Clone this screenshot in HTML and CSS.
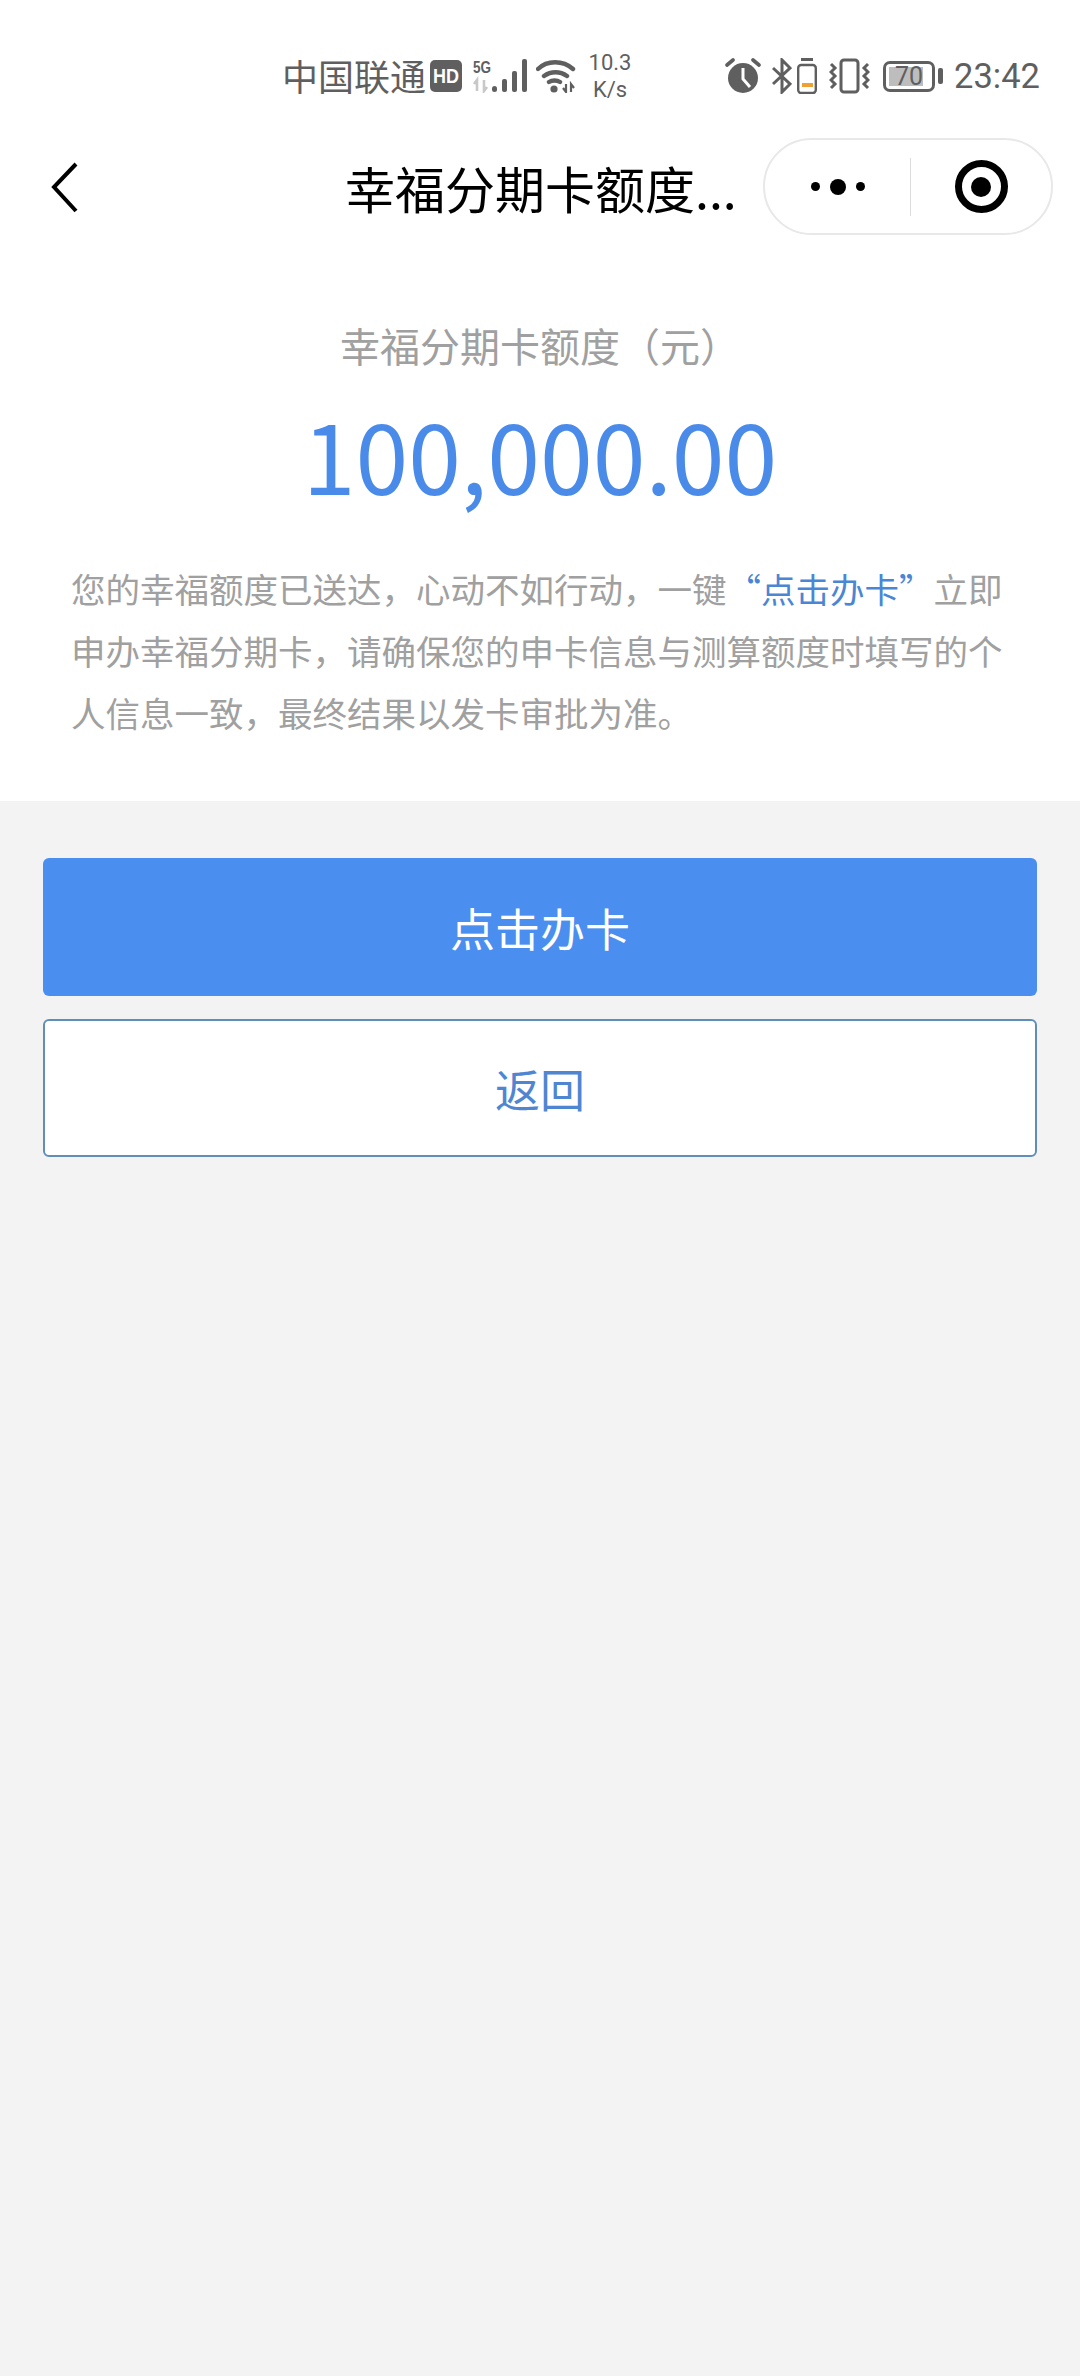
FILE: index.html
```html
<!DOCTYPE html>
<html lang="zh-CN">
<head>
    <meta charset="UTF-8">
    <meta name="viewport" content="width=device-width, initial-scale=1.0">
    <title>幸福分期卡额度</title>
    <link rel="stylesheet" href="styles.css">
</head>
<body>
    <div class="status-bar">
        <span class="carrier">中国联通</span>
        <svg class="icon-hd" width="32" height="32" viewBox="0 0 32 32">
            <rect width="32" height="32" rx="5" fill="#5f5f5f"/>
            <text x="16" y="23" text-anchor="middle" textLength="26" lengthAdjust="spacingAndGlyphs" class="hd-text">HD</text>
        </svg>
        <svg class="icon-signal" width="54" height="34" viewBox="0 0 54 34">
            <text x="0" y="14" textLength="18" lengthAdjust="spacingAndGlyphs" class="net-text">5G</text>
            <path d="M4 32V21l-3 4M11 21v11l3-4" stroke="#c8c8c8" stroke-width="2.6" fill="none"/>
            <rect x="19" y="27" width="5" height="6" rx="2.5" fill="#5f5f5f"/>
            <rect x="29" y="20" width="5" height="13" rx="2" fill="#5f5f5f"/>
            <rect x="39" y="12" width="5" height="21" rx="2" fill="#5f5f5f"/>
            <rect x="49" y="0" width="5" height="33" rx="2" fill="#5f5f5f"/>
        </svg>
        <svg class="icon-wifi" width="40" height="34" viewBox="0 0 40 34">
            <path d="M2 10C11 1 27 1 37 10M8 17c7-5 16-5 23 0M13 23c3-2 8-2 11 0" stroke="#5f5f5f" stroke-width="4.4" fill="none" stroke-linecap="round"/>
            <circle cx="18" cy="30" r="3.6" fill="#5f5f5f"/>
            <path d="M30 25v8l-3-4M35 33v-8l3 4" stroke="#5f5f5f" stroke-width="2.2" fill="none"/>
        </svg>
        <div class="speed">
            <span>10.3</span>
            <span>K/s</span>
        </div>
        <svg class="icon-alarm" width="36" height="36" viewBox="0 0 36 36">
            <circle cx="18" cy="20" r="15" fill="#5f5f5f"/>
            <path d="M18 10v11l7 8" stroke="#fff" stroke-width="3" fill="none"/>
            <path d="M2 7l6-5M34 7l-6-5" stroke="#5f5f5f" stroke-width="3.6" stroke-linecap="round"/>
        </svg>
        <svg class="icon-bt" width="20" height="36" viewBox="0 0 20 36">
            <path d="M1 10l17 16-8 8V2l8 8L1 26" stroke="#5f5f5f" stroke-width="3" fill="none"/>
        </svg>
        <svg class="icon-phone-battery" width="20" height="36" viewBox="0 0 20 36">
            <rect x="4" y="0" width="12" height="3" fill="#5f5f5f"/>
            <rect x="1.2" y="7" width="17.6" height="28" rx="3" stroke="#5f5f5f" stroke-width="2.4" fill="none"/>
            <rect x="5" y="25" width="11" height="4" fill="#f0a030"/>
        </svg>
        <svg class="icon-vibrate" width="41" height="36" viewBox="0 0 41 36">
            <rect x="12" y="2" width="17" height="32" rx="3" stroke="#5f5f5f" stroke-width="3" fill="none"/>
            <path d="M2 6l4 4-4 4 4 4-4 4 4 4-4 4M39 6l-4 4 4 4-4 4 4 4-4 4 4 4" stroke="#5f5f5f" stroke-width="3" fill="none"/>
        </svg>
        <div class="battery">
            <div class="battery-body">
                <div class="battery-fill"></div>
                <span class="battery-num">70</span>
            </div>
            <div class="battery-nub"></div>
        </div>
        <span class="clock">23:42</span>
    </div>

    <div class="nav-bar">
        <svg class="back-icon" width="34" height="52" viewBox="0 0 34 52">
            <path d="M30 3L8 26l22 24" stroke="#000" stroke-width="4" fill="none"/>
        </svg>
        <div class="nav-title">幸福分期卡额度...</div>
        <div class="capsule">
            <div class="capsule-more">
                <i class="dot"></i><i class="dot dot-big"></i><i class="dot"></i>
            </div>
            <div class="capsule-line"></div>
            <div class="capsule-close">
                <div class="target"><div class="target-dot"></div></div>
            </div>
        </div>
    </div>

    <div class="quota-card">
        <div class="quota-label">幸福分期卡额度（元）</div>
        <div class="quota-amount">100,000.00</div>
        <p class="quota-desc">您的幸福额度已送达，心动不如行动，一键<span class="link">“点击办卡”</span>立即申办幸福分期卡，请确保您的申卡信息与测算额度时填写的个人信息一致，最终结果以发卡审批为准。</p>
    </div>

    <div class="actions">
        <button class="btn btn-primary">点击办卡</button>
        <button class="btn btn-outline">返回</button>
    </div>
</body>
</html>
```

FILE: styles.css
```css
* {
    box-sizing: border-box;
}
body {
    margin: 0;
    height: 2376px;
    background-color: #f3f3f3;
    font-family: "Noto Sans CJK SC", "Noto Sans", sans-serif;
    overflow: hidden;
}
.status-bar {
    display: flex;
    align-items: center;
    height: 138px;
    padding: 14px 0 0 282px;
    background: #fff;
    color: #5f5f5f;
}
.status-bar > * {
    flex: none;
}
.carrier {
    width: 148px;
    padding-bottom: 3px;
    font-size: 36px;
    line-height: 40px;
    white-space: nowrap;
}
.hd-text {
    font: bold 20px "Liberation Sans", sans-serif;
    fill: #fff;
}
.net-text {
    font: bold 17px "Liberation Sans", sans-serif;
    fill: #5f5f5f;
}
.icon-signal {
    margin-left: 11px;
}
.icon-wifi {
    margin-left: 9px;
}
.speed {
    display: flex;
    flex-direction: column;
    align-items: center;
    width: 44px;
    margin-left: 12px;
    font: 22px/27px Roboto, sans-serif;
}
.icon-alarm {
    margin-left: 93px;
}
.icon-bt {
    margin-left: 11px;
}
.icon-phone-battery {
    margin-left: 5px;
}
.icon-vibrate {
    margin-left: 12px;
}
.battery {
    display: flex;
    align-items: center;
    gap: 3px;
    margin-left: 13px;
}
.battery-body {
    position: relative;
    width: 52px;
    height: 31px;
    border: 3px solid #5f5f5f;
    border-radius: 7px;
    padding: 3px;
}
.battery-fill {
    width: 84%;
    height: 100%;
    background: #bdbdbd;
}
.battery-num {
    position: absolute;
    top: 0;
    left: 0;
    width: 100%;
    text-align: center;
    font: 25px/25px Roboto, sans-serif;
}
.battery-nub {
    width: 5px;
    height: 16px;
    background: #5f5f5f;
    border-radius: 2px;
}
.clock {
    margin-left: 11px;
    font: 34.5px/40px Roboto, sans-serif;
}
.nav-bar {
    display: flex;
    align-items: center;
    height: 97px;
    padding: 0 27px 0 46px;
    background: #fff;
}
.nav-title {
    width: 400px;
    margin-left: 265px;
    font-size: 50px;
    line-height: 60px;
    color: #000;
    white-space: nowrap;
}
.capsule {
    display: flex;
    align-items: center;
    width: 290px;
    height: 97px;
    margin-left: 18px;
    border: 2px solid #e8e8e8;
    border-radius: 49px;
}
.capsule-more {
    display: flex;
    align-items: center;
    justify-content: center;
    gap: 10px;
    width: 145px;
}
.dot {
    width: 9px;
    height: 9px;
    border-radius: 50%;
    background: #000;
}
.dot-big {
    width: 16px;
    height: 16px;
}
.capsule-line {
    width: 1px;
    height: 58px;
    background: #dcdcdc;
}
.capsule-close {
    display: flex;
    justify-content: center;
    flex: 1;
}
.target {
    display: flex;
    align-items: center;
    justify-content: center;
    width: 53px;
    height: 53px;
    border: 7px solid #000;
    border-radius: 50%;
}
.target-dot {
    width: 20px;
    height: 20px;
    border-radius: 50%;
    background: #000;
}
.quota-card {
    height: 566px;
    padding: 82px 71px 0;
    background: #fff;
    text-align: center;
}
.quota-label {
    font-size: 40px;
    line-height: 56px;
    color: #a0a0a0;
}
.quota-amount {
    margin-top: 25px;
    font-size: 95px;
    line-height: 112px;
    color: #4a8bea;
}
.quota-desc {
    margin: 47px 0 0;
    font-size: 34.5px;
    line-height: 62px;
    color: #a0a0a0;
    text-align: left;
}
.link {
    color: #4a86d4;
}
.actions {
    display: flex;
    flex-direction: column;
    gap: 23px;
    padding: 57px 43px 0;
}
.btn {
    height: 138px;
    border-radius: 6px;
    font-family: inherit;
    font-size: 45px;
}
.btn-primary {
    background: #4a8eef;
    border: none;
    color: #fff;
}
.btn-outline {
    background: #fff;
    border: 2px solid #5f8fb8;
    color: #4f86d2;
}
```
